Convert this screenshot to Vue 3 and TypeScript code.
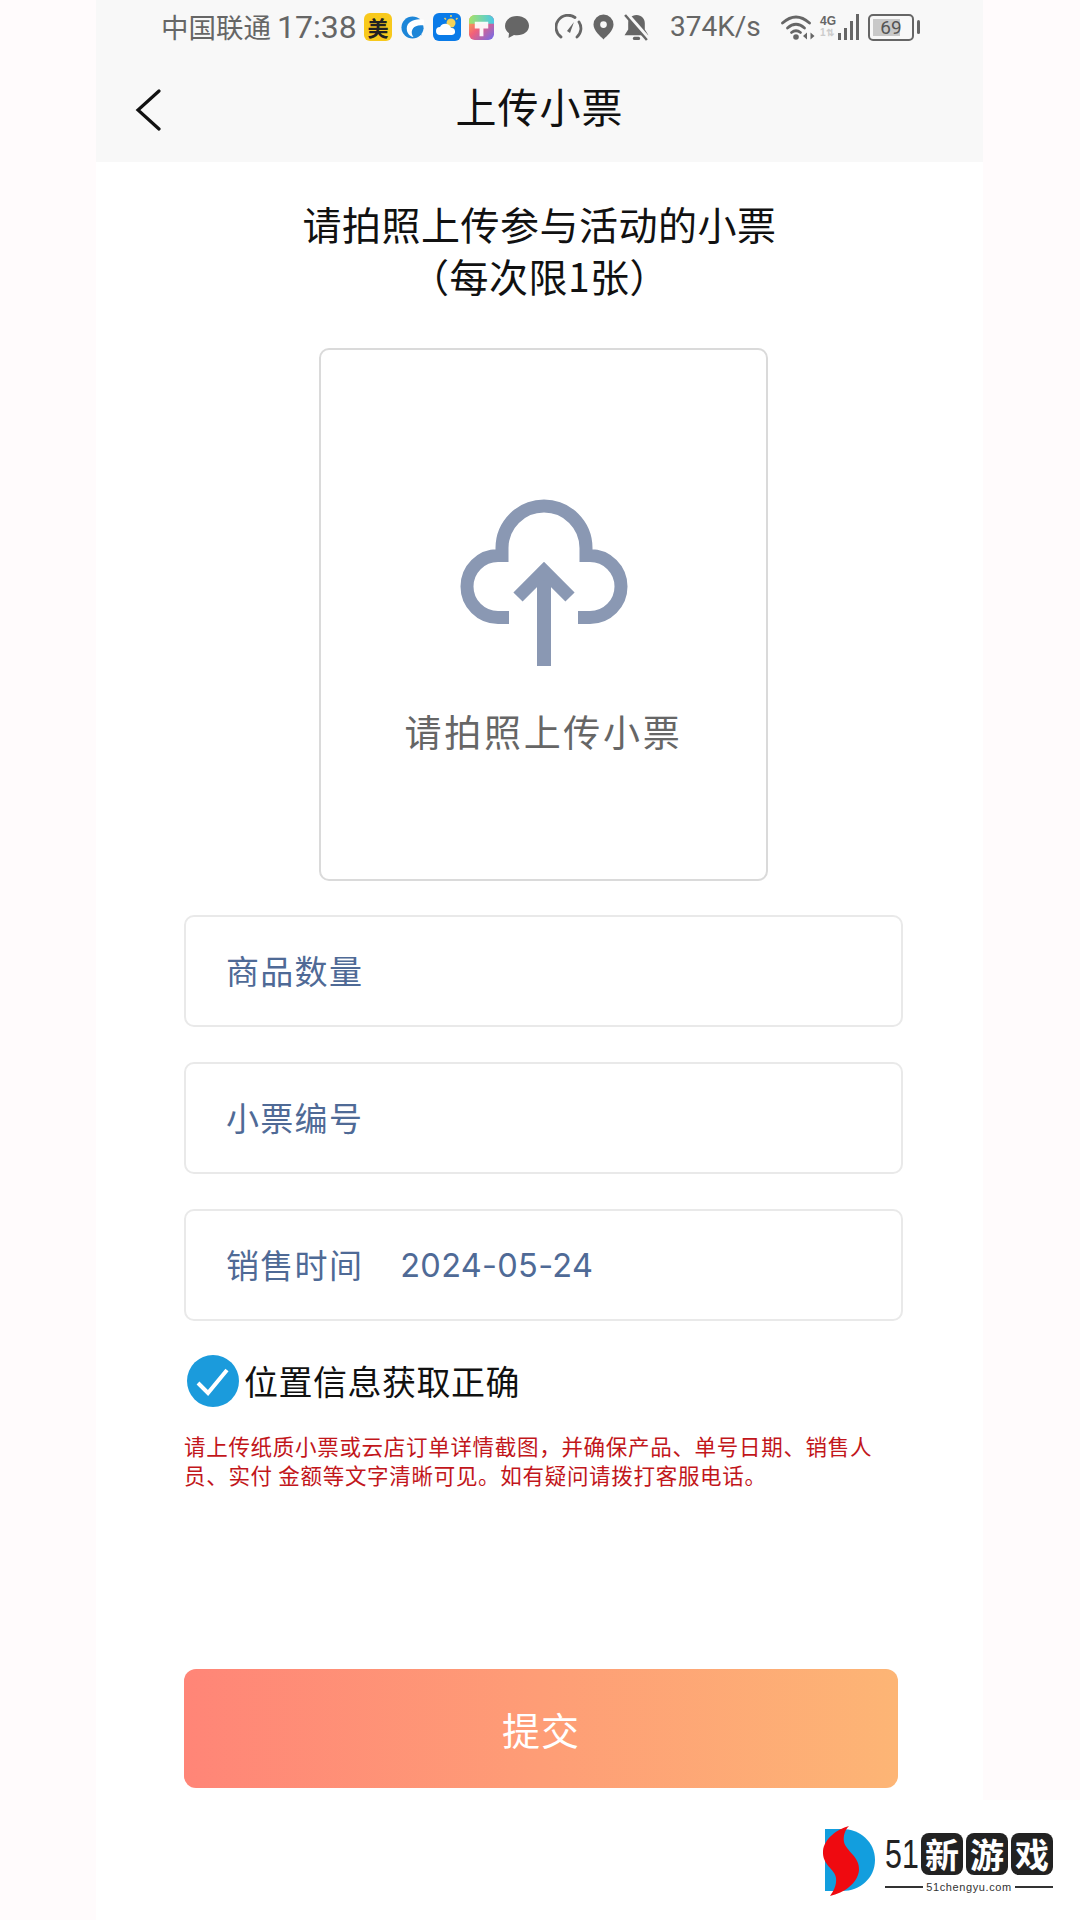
<script setup lang="ts">
const fields: { label: string; value?: string }[] = [
  { label: '商品数量' },
  { label: '小票编号' },
  { label: '销售时间', value: '2024-05-24' },
]
</script>

<template>
  <div class="page">
    <div class="column">
      <header class="header">
        <div class="status">
          <span class="carrier">中国联通</span>
          <span class="clock">17:38</span>
          <span class="meituan">美</span>
          <svg class="ic-edge" viewBox="0 0 24 26" width="23" height="25">
            <circle cx="12" cy="13" r="11.500" fill="#1d86d8" />
            <path d="M24 5C15 3 6 7 6 14C6 19 9 22 13 23C10 19 11 14 15 12C18 10.500 21 10.500 24 11Z" fill="#fff" />
            <path d="M13 14C16 12 20 12 24 14L17 16L22 21C17 21 13 18 13 14Z" fill="#1d86d8" />
          </svg>
          <svg class="ic-weather" viewBox="0 0 28 28" width="28" height="28">
            <rect width="28" height="28" rx="6" fill="#0a7be8" />
            <circle cx="18" cy="10" r="4.500" fill="#f5d35a" />
            <path d="M18 2v2M24.500 5l-1.500 1.500M11.500 5L13 6.500" stroke="#f5d35a" stroke-width="1.500" />
            <path d="M7 22a4 4 0 0 1 0-8a6 6 0 0 1 11 1a3.500 3.500 0 0 1 1 7Z" fill="#fff" />
          </svg>
          <svg class="ic-paint" viewBox="0 0 26 26" width="25" height="25">
            <defs>
              <linearGradient id="paintFill" x1="0" y1="0" x2="1" y2="1">
                <stop offset="0" stop-color="#f8c13c" />
                <stop offset="0.45" stop-color="#f2607a" />
                <stop offset="1" stop-color="#6a6cf0" />
              </linearGradient>
              <linearGradient id="paintTop" x1="0" y1="0" x2="1" y2="0">
                <stop offset="0" stop-color="#a5e26a" />
                <stop offset="1" stop-color="#49c8e8" />
              </linearGradient>
            </defs>
            <rect width="26" height="26" rx="6" fill="url(#paintFill)" />
            <path d="M0 6a6 6 0 0 1 6-6h14a6 6 0 0 1 6 6v3H0Z" fill="url(#paintTop)" />
            <path d="M6 7h14v7h-5v8h-4v-8H6Z" fill="#fff" opacity="0.92" />
          </svg>
          <svg class="ic-chat" viewBox="0 0 26 24" width="26" height="24">
            <path d="M13 1C6 1 1 5 1 11c0 3 1.500 5.500 4 7.300L4.500 23l5.500-3c1 .2 2 .3 3 .3c7 0 12-4 12-9.500S20 1 13 1Z" fill="#666" />
          </svg>
          <svg class="ic-gauge" viewBox="0 0 28 26" width="28" height="26">
            <path d="M6 23A11.500 11.500 0 0 1 20 3.500M24 8A11.500 11.500 0 0 1 22 23" fill="none" stroke="#666" stroke-width="2.800" stroke-linecap="round" />
            <path d="M19 8L12 17L15 19Z" fill="#666" />
          </svg>
          <svg class="ic-pin" viewBox="0 0 22 26" width="21" height="26">
            <path fill-rule="evenodd" d="M11 0a10.500 10.500 0 0 1 10.500 10.500C21.500 17 14 23 11 26C8 23 .5 17 .5 10.500A10.500 10.500 0 0 1 11 0Zm0 7a3.500 3.500 0 1 0 0 7a3.500 3.500 0 0 0 0-7Z" fill="#666" />
          </svg>
          <svg class="ic-bell" viewBox="0 0 26 26" width="27" height="27">
            <path d="M13 1c-5 0-8 3.500-8 8V15l-3.500 5.500h23L21 15V9c0-4.500-3-8-8-8Z" fill="#666" />
            <rect x="9.500" y="22" width="7" height="3" rx="1.500" fill="#666" />
            <path d="M4 0L25 24" stroke="#f8f8f8" stroke-width="3.500" />
            <path d="M2 1L23 25" stroke="#666" stroke-width="2.400" />
          </svg>
          <span class="speed">374K/s</span>
          <svg class="ic-wifi" viewBox="0 0 34 26" width="34" height="26">
            <g fill="none" stroke="#666" stroke-width="2.800" stroke-linecap="round">
              <path d="M1.500 9Q15 -3 28.500 9" />
              <path d="M6.500 14Q15 6.500 23.500 14" />
              <path d="M10.500 18.500Q15 15 19.500 18.500" />
            </g>
            <circle cx="15" cy="23" r="2.800" fill="#666" />
            <path d="M22 22l4-3.500v7ZM33.500 22l-4-3.500v7Z" fill="#666" />
          </svg>
          <div class="net">
            <span class="net-g">4G</span>
            <span class="net-1">1⇅</span>
          </div>
          <div class="signal">
            <i class="bar b1"></i><i class="bar b2"></i><i class="bar b3"></i><i class="bar b4"></i>
          </div>
          <div class="battery">
            <div class="cell"><span class="level"></span><span class="pct">69</span></div>
            <i class="tip"></i>
          </div>
        </div>
        <div class="nav">
          <svg class="back" viewBox="0 0 26 42" width="26" height="42">
            <path d="M24 2L3 21L24 40" fill="none" stroke="#111" stroke-width="3.200" stroke-linecap="round" />
          </svg>
          <h1 class="nav-title">上传小票</h1>
          <span></span>
        </div>
      </header>

      <main class="main">
        <p class="lead">请拍照上传参与活动的小票<br />（每次限1张）</p>

        <div class="form">
          <div class="upload">
            <svg class="cloud" viewBox="0 0 168 167" width="168" height="167">
              <path d="M49 118.500H38a31 31 0 0 1 0-62h4V49A42 42 0 0 1 126 49v7.500h4a31 31 0 0 1 0 62H118" fill="none" stroke="#8a98b3" stroke-width="13" />
              <path d="M84 167V72" fill="none" stroke="#8a98b3" stroke-width="14" />
              <path d="M58 98L84 72L110 98" fill="none" stroke="#8a98b3" stroke-width="13" />
            </svg>
            <span class="upload-label">请拍照上传小票</span>
          </div>

          <div class="fields">
            <div v-for="f in fields" :key="f.label" class="field">
              <span class="field-label">{{ f.label }}</span>
              <span v-if="f.value" class="field-value">{{ f.value }}</span>
            </div>
          </div>

          <div class="check">
            <svg class="check-ic" viewBox="0 0 52 52" width="52" height="52">
              <circle cx="26" cy="26" r="26" fill="#1b9bdc" />
              <path d="M11 28L21 38L40 15" fill="none" stroke="#fff" stroke-width="4" />
            </svg>
            <span class="check-text">位置信息获取正确</span>
          </div>

          <p class="note">请上传纸质小票或云店订单详情截图，并确保产品、单号日期、销售人员、实付 金额等文字清晰可见。如有疑问请拨打客服电话。</p>

          <button class="submit" type="button">提交</button>
        </div>
      </main>
    </div>

    <div class="mark">
      <svg class="mark-logo" viewBox="0 0 54 72" width="54" height="72">
        <path d="M3 4H20C38 4 53 17 53 35C53 53 38 66 20 66H3Z" fill="#129ede" />
        <path d="M27 1C15 4 2 14 1 26C0 40 13 44 14 53C15 60 11 67 8 71C22 68 36 58 37 45C38 32 24 26 22 17C21 11 23 5 27 1Z" fill="#ef0a10" />
      </svg>
      <div class="mark-text">
        <div class="mark-top">
          <span class="mark-51">51</span>
          <span class="mark-ch">新</span>
          <span class="mark-ch">游</span>
          <span class="mark-ch">戏</span>
        </div>
        <div class="mark-url"><i></i><span>51chengyu.com</span><i></i></div>
      </div>
    </div>
  </div>
</template>

<style scoped>
.page {
  position: relative;
  width: 1080px;
  height: 1920px;
  overflow: hidden;
  background: #fffbfc;
  font-family: "Noto Sans CJK SC", "Noto Sans", sans-serif;
}
.column {
  width: 887px;
  height: 100%;
  margin-left: 96px;
  background: #fff;
}
.header {
  height: 162px;
  background: #f8f8f8;
  display: flex;
  flex-direction: column;
}
.status {
  height: 54px;
  display: flex;
  align-items: center;
  padding-left: 65px;
  color: #666;
}
.carrier {
  width: 111px;
  font-size: 27.500px;
  line-height: 1;
  white-space: nowrap;
}
.clock {
  margin-left: 5px;
  width: 83px;
  font-family: Roboto, sans-serif;
  font-size: 32px;
  line-height: 1;
}
.meituan {
  width: 28px;
  height: 28px;
  margin-left: 4px;
  border-radius: 6px;
  background: #f8c91c;
  color: #222;
  font-size: 21px;
  font-weight: 700;
  line-height: 28px;
  text-align: center;
}
.ic-edge { margin-left: 9px; }
.ic-weather { margin-left: 9px; }
.ic-paint { margin-left: 8px; }
.ic-chat { margin-left: 10px; }
.ic-gauge { margin-left: 25px; }
.ic-pin { margin-left: 10px; }
.ic-bell { margin-left: 9px; }
.speed {
  margin-left: 20px;
  width: 92px;
  font-family: Roboto, sans-serif;
  font-size: 28px;
  line-height: 1;
  white-space: nowrap;
}
.ic-wifi { margin-left: 19px; }
.net {
  margin-left: 5px;
  width: 15px;
  display: flex;
  flex-direction: column;
  font-family: "Liberation Sans", sans-serif;
  font-weight: 700;
  line-height: 12px;
}
.net-g { font-size: 12px; color: #666; white-space: nowrap; }
.net-1 { font-size: 10px; color: #ccc; white-space: nowrap; }
.signal {
  height: 26px;
  margin-left: 3px;
  display: flex;
  align-items: flex-end;
  gap: 3px;
}
.bar { width: 3px; background: #666; display: block; }
.b1 { height: 7px; }
.b2 { height: 12px; }
.b3 { height: 19px; }
.b4 { height: 26px; }
.battery {
  margin-left: 9px;
  display: flex;
  align-items: center;
  gap: 3px;
}
.cell {
  position: relative;
  width: 42px;
  height: 23px;
  border: 2px solid #666;
  border-radius: 5px;
  display: flex;
  align-items: center;
  justify-content: center;
}
.level {
  position: absolute;
  left: 3px;
  top: 3px;
  bottom: 3px;
  width: 27px;
  background: #c9c9c9;
}
.pct {
  position: relative;
  font-family: Roboto, sans-serif;
  font-size: 19px;
  line-height: 1;
  color: #555;
}
.tip {
  display: block;
  width: 3px;
  height: 14px;
  border-radius: 2px;
  background: #666;
}
.nav {
  flex: 1;
  display: grid;
  grid-template-columns: 1fr auto 1fr;
  align-items: center;
}
.back {
  display: block;
  margin: 4px 0 0 39px;
}
.nav-title {
  margin: 0 0 6px;
  color: #111;
  font-size: 41px;
  font-weight: 400;
  line-height: 1;
  letter-spacing: 1px;
}
.main {
  display: flex;
  flex-direction: column;
}
.lead {
  margin: 35px 0 0;
  color: #111;
  font-size: 39px;
  line-height: 52px;
  letter-spacing: 0.5px;
  text-align: center;
}
.form {
  display: flex;
  flex-direction: column;
  margin: 47px 0 0 88px;
  width: 719px;
}
.upload {
  width: 449px;
  height: 533px;
  margin-left: 135px;
  box-sizing: border-box;
  border: 2px solid #dadada;
  border-radius: 10px;
  display: flex;
  flex-direction: column;
  align-items: center;
  padding-top: 149px;
}
.cloud { display: block; }
.upload-label {
  margin-top: 42px;
  color: #666;
  font-size: 37px;
  line-height: 46px;
  letter-spacing: 2.700px;
}
.fields {
  margin-top: 34px;
  display: flex;
  flex-direction: column;
  gap: 35px;
}
.field {
  height: 112px;
  box-sizing: border-box;
  border: 2px solid #e9e9e9;
  border-radius: 10px;
  padding-left: 40px;
  display: flex;
  align-items: center;
  color: #4f6a96;
  font-size: 33px;
}
.field-label {
  margin-bottom: 2px;
  letter-spacing: 1.300px;
}
.field-value {
  margin-left: 37px;
  font-family: Inter, sans-serif;
  font-size: 32.500px;
  letter-spacing: 0.3px;
}
.check {
  margin: 34px 0 0 3px;
  display: flex;
  align-items: center;
  gap: 5px;
}
.check-ic { display: block; flex: none; }
.check-text {
  color: #111;
  font-size: 34px;
  line-height: 52px;
  letter-spacing: 0.5px;
}
.note {
  margin: 24px 0 0;
  color: #c2161b;
  font-size: 21.500px;
  line-height: 29px;
  letter-spacing: 0.7px;
}
.submit {
  margin-top: 180px;
  width: 714px;
  height: 119px;
  border: none;
  border-radius: 12px;
  background: linear-gradient(90deg, #ff8577, #fdb575);
  color: #fff;
  font-family: inherit;
  font-size: 38px;
  padding: 0;
  letter-spacing: 1px;
}
.mark {
  position: absolute;
  left: 800px;
  top: 1800px;
  width: 280px;
  height: 120px;
  background: #fff;
  display: flex;
  align-items: flex-start;
  padding: 25px 0 0 22px;
  box-sizing: border-box;
  gap: 9px;
}
.mark-logo { display: block; flex: none; }
.mark-text {
  display: flex;
  flex-direction: column;
  width: 168px;
  margin-top: 8px;
}
.mark-top {
  display: flex;
  align-items: center;
  gap: 3px;
}
.mark-51 {
  width: 33px;
  font-family: "Liberation Sans", sans-serif;
  font-size: 40px;
  line-height: 42px;
  color: #222;
  transform: scaleX(0.76);
  transform-origin: left center;
}
.mark-ch {
  width: 42px;
  height: 42px;
  background: #222;
  border-radius: 8px;
  color: #fff;
  font-size: 34px;
  font-weight: 700;
  line-height: 42px;
  text-align: center;
}
.mark-url {
  margin-top: 5px;
  display: flex;
  align-items: center;
  gap: 3px;
  color: #333;
  font-family: "Liberation Sans", sans-serif;
  font-size: 11px;
  letter-spacing: 0.6px;
  line-height: 14px;
}
.mark-url i {
  flex: 1;
  height: 2px;
  background: #333;
  display: block;
}
</style>
